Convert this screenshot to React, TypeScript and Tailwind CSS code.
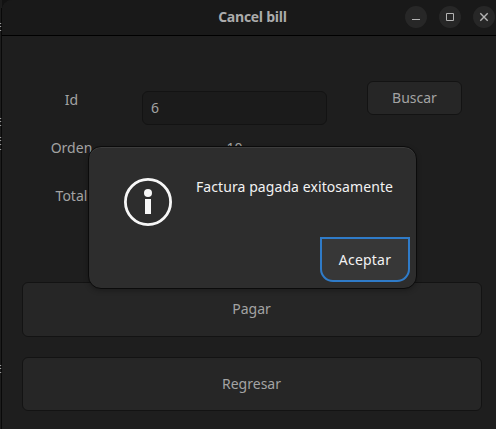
import type { ReactNode } from "react";

function EdgeMarks() {
  // Lines of the document behind the window, visible along its left edge.
  return (
    <svg width="2" height="429" className="block shrink-0 bg-[#1c1c1c]" shapeRendering="crispEdges">
      <g fill="#9a9a9a">
        {[23, 26, 30, 118, 121, 125, 137, 140, 144, 149, 365, 368, 372].map((y) => (
          <rect key={y} x="0" y={y} width="2" height="1" />
        ))}
      </g>
      <rect x="1" y="8" width="1" height="421" fill="#050505" fillOpacity="0.8" />
    </svg>
  );
}

function WindowControl({ children }: { children: ReactNode }) {
  return (
    <button className="flex size-[22px] items-center justify-center rounded-full bg-[#272727]">
      <svg width="22" height="22" viewBox="0 0 22 22" fill="none" stroke="#b4b4b4">
        {children}
      </svg>
    </button>
  );
}

function TitleBar() {
  return (
    <header className="grid h-9 shrink-0 grid-cols-[1fr_auto_1fr] rounded-tl-[10px] border-b border-black bg-[#191919]">
      <span />
      <h1 className="mt-[7px] ml-[7px] font-['Open_Sans',sans-serif] text-[14px] leading-5 font-bold tracking-[-0.27px] text-[#acacac]">
        Cancel bill
      </h1>
      <div className="mt-1.5 mr-px flex justify-end gap-3">
        <WindowControl>
          <path d="M7 13.5H15" />
        </WindowControl>
        <WindowControl>
          <path d="M7.5 7.5H14.5V14.5H7.5Z" />
        </WindowControl>
        <WindowControl>
          <path d="M7.3 7.3L14.7 14.7M14.7 7.3L7.3 14.7" strokeWidth="1.4" />
        </WindowControl>
      </div>
    </header>
  );
}

function Label({ children }: { children: string }) {
  return <span className="w-[138px] pl-px text-center leading-5">{children}</span>;
}

function WideButton({ children, className }: { children: string; className: string }) {
  return (
    <button className={`w-full rounded-[6px] border border-[#131313] bg-[#262626] pr-px pb-0.5 ${className}`}>
      {children}
    </button>
  );
}

function Dialog() {
  return (
    <section
      role="dialog"
      className="absolute top-[146px] left-[88px] flex h-[143px] w-[329px] flex-col rounded-[13px] border border-[#0b0b0b] bg-[#2d2d2d] text-[#f2f2f2] shadow-[inset_0_1px_0_#3d3d3d,0_2px_5px_rgba(0,0,0,0.25)]"
    >
      <div className="flex h-[90px] shrink-0 pl-[35px]">
        <svg width="48" height="48" viewBox="0 0 48 48" className="mt-[31px] shrink-0">
          <circle cx="24" cy="24" r="22.6" fill="none" stroke="#f7f7f7" strokeWidth="2.8" />
          <circle cx="24" cy="15" r="4" fill="#f7f7f7" />
          <rect x="21" y="21" width="6" height="15" fill="#f7f7f7" />
        </svg>
        <p className="mt-[30px] ml-6 leading-5 tracking-[0.08px] whitespace-nowrap">
          Factura pagada exitosamente
        </p>
      </div>
      <button className="mr-1.5 h-[45px] w-[90px] self-end rounded-b-[13px] border-2 border-[#2f7bc8] bg-[#373737] tracking-[0.2px]">
        Aceptar
      </button>
    </section>
  );
}

export default function App() {
  return (
    <div className="relative flex h-[429px] w-[496px] overflow-hidden bg-[#121212] font-['Noto_Sans','Open_Sans',sans-serif] text-[14px] text-[#a3a3a3]">
      <EdgeMarks />
      <div className="flex min-w-0 flex-1 flex-col rounded-tl-[10px] bg-[#1e1e1e]">
        <TitleBar />
        <main className="flex flex-1 flex-col">
          <div className="mt-[45px] flex h-[57px] items-start">
            <div className="mt-[9px] flex">
              <Label>Id</Label>
            </div>
            <input
              readOnly
              value="6"
              className="mt-2.5 ml-0.5 h-[34px] w-[185px] rounded-[6px] border border-[#131313] bg-[#1b1b1b] px-2 pb-0.5 outline-none"
            />
            <button className="ml-10 h-[34px] w-[95px] rounded-[6px] border border-[#131313] bg-[#262626] px-0 pb-0.5">
              Buscar
            </button>
          </div>
          <div className="flex h-12 shrink-0">
            <Label>Orden</Label>
            <span className="ml-0.5 w-[185px] text-center leading-5">10</span>
          </div>
          <div className="flex h-12 shrink-0">
            <Label>Total</Label>
          </div>
          <div className="mt-12 flex flex-col gap-5 pr-3.5 pl-5">
            <WideButton className="h-[55px]">Pagar</WideButton>
            <WideButton className="h-[54px]">Regresar</WideButton>
          </div>
        </main>
      </div>
      <Dialog />
    </div>
  );
}
